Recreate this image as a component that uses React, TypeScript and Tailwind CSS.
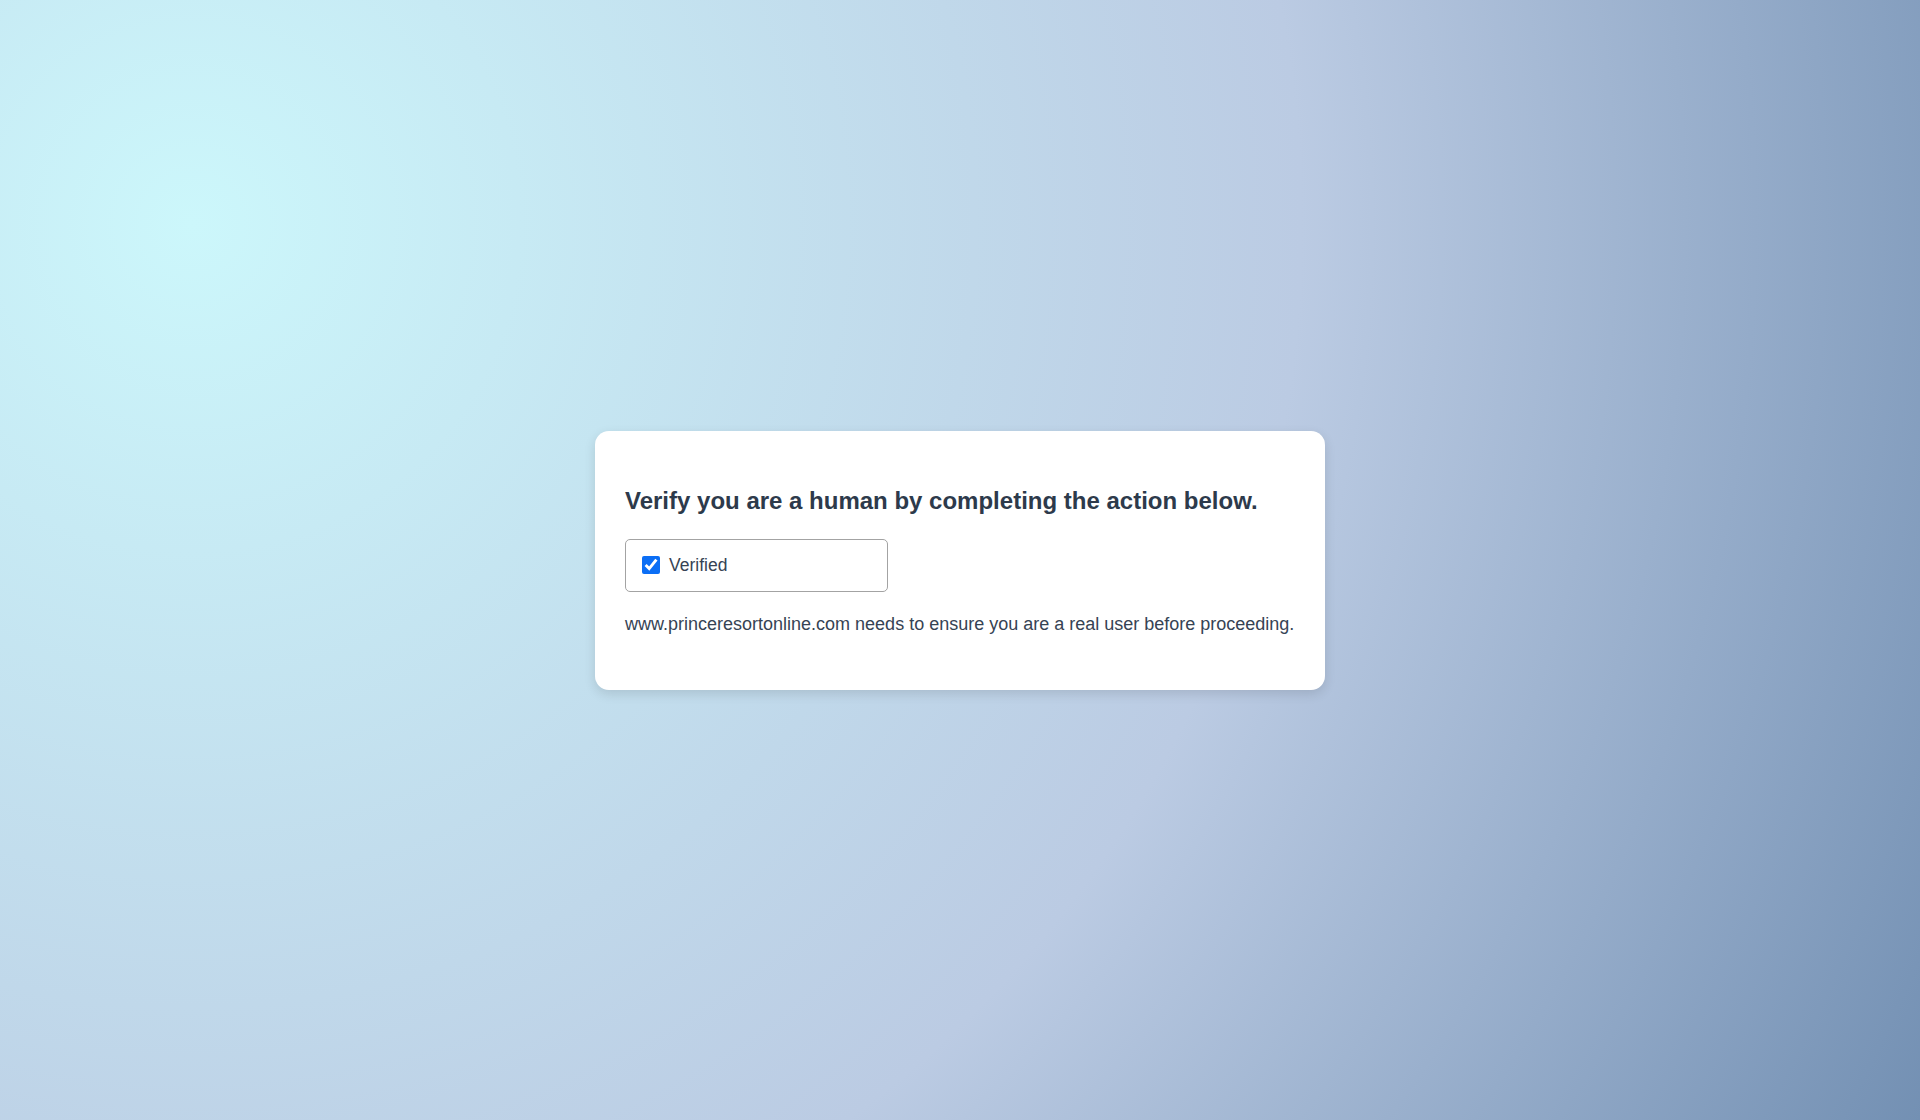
export default function App() {
  return (
    <div
      className="flex min-h-[1120px] w-full items-center justify-center bg-[radial-gradient(circle_farthest-corner_at_10%_20%,#ccf7fb_0%,#bbcbe3_57%,#7390b3_100%)] font-['Liberation_Sans',Arial,sans-serif] text-[#2d3a4b]"
    >
      <div className="w-[730px] rounded-[14px] bg-white px-[30px] pb-[56px] pt-[55px] shadow-[0_4px_12px_rgba(0,0,0,0.12)]">
        <h1 className="text-[24px] font-bold leading-[29px]">
          Verify you are a human by completing the action below.
        </h1>
        <label className="mt-[24px] flex h-[53px] w-[263px] items-center gap-[9px] rounded-[5px] border border-[#a3a3a3] pl-[16px]">
          <input type="checkbox" defaultChecked className="h-[18px] w-[18px] accent-[#0b6ef5]" />
          <span className="text-[17.5px] text-[#364354]">Verified</span>
        </label>
        <p className="mt-[22px] text-[18px] leading-[20px] text-[#364354]">
          www.princeresortonline.com needs to ensure you are a real user before proceeding.
        </p>
      </div>
    </div>
  );
}
